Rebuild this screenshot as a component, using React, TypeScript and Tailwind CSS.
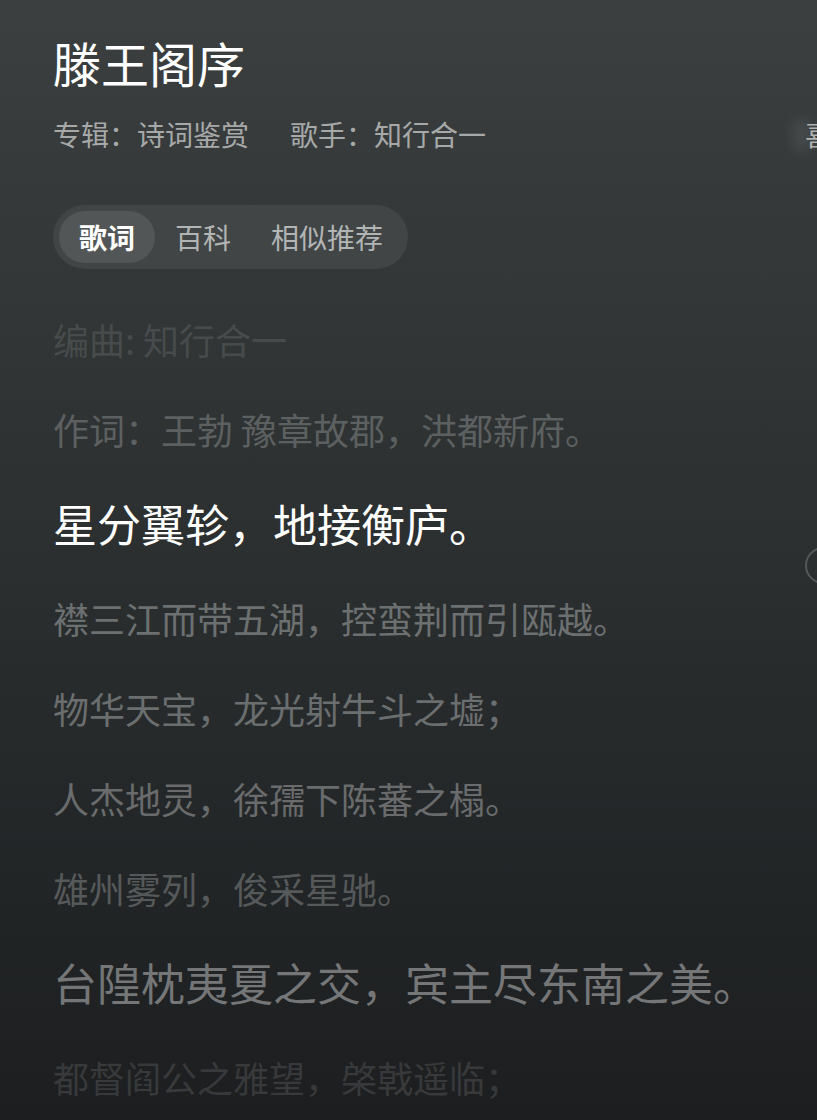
import React from 'react';

const FONT = '"Noto Sans CJK SC", "Noto Sans", sans-serif';

type Line = { text: string; tone: string; big?: boolean };

const lines: Line[] = [
  { text: '编曲: 知行合一', tone: 'text-[#474b4c]' },
  { text: '作词：王勃 豫章故郡，洪都新府。', tone: 'text-[#5d6061]' },
  { text: '星分翼轸，地接衡庐。', tone: 'text-white', big: true },
  { text: '襟三江而带五湖，控蛮荆而引瓯越。', tone: 'text-[#6d7071]' },
  { text: '物华天宝，龙光射牛斗之墟；', tone: 'text-[#6b6e6f]' },
  { text: '人杰地灵，徐孺下陈蕃之榻。', tone: 'text-[#696b6c]' },
  { text: '雄州雾列，俊采星驰。', tone: 'text-[#56595a]' },
  { text: '台隍枕夷夏之交，宾主尽东南之美。', tone: 'text-[#747677]', big: true },
  { text: '都督阎公之雅望，棨戟遥临；', tone: 'text-[#37393b]' },
];

function Tabs() {
  const tabs = ['歌词', '百科', '相似推荐'];
  return (
    <div className="mt-[57px] inline-flex items-center rounded-full bg-[#414546] p-[6px] pr-[5px]">
      {tabs.map((tab, i) => (
        <div
          key={tab}
          className={
            i === 0
              ? 'rounded-full bg-[#535657] px-5 py-3 text-[28px] leading-[28px] font-bold text-white'
              : 'rounded-full px-5 py-3 text-[28px] leading-[28px] text-[#b3b5b5]'
          }
        >
          {tab}
        </div>
      ))}
    </div>
  );
}

export default function App() {
  return (
    <div
      className="relative h-[1120px] w-[817px] overflow-hidden bg-gradient-to-b from-[#3b3f40] via-[#2b2f30] to-[#1c1e20]"
      style={{ fontFamily: FONT }}
    >
      <div className="flex flex-col items-start pl-[53px] pt-[38px]">
        <h1 className="text-[48px] leading-[48px] font-normal text-white">滕王阁序</h1>

        <div className="mt-[34px] flex gap-[41px] text-[28px] leading-[28px] text-[#a7a9a9]">
          <span>专辑：诗词鉴赏</span>
          <span>歌手：知行合一</span>
        </div>

        <Tabs />

        <div className="mt-[25px] flex flex-col">
          {lines.map((line) => (
            <p
              key={line.text}
              className={
                line.big
                  ? `h-[99px] whitespace-nowrap text-[44px] leading-[99px] ${line.tone}`
                  : `h-[90px] whitespace-nowrap text-[36px] leading-[90px] ${line.tone}`
              }
            >
              {line.text}
            </p>
          ))}
        </div>
      </div>

      {/* clipped neighbour text at right edge of the meta row */}
      <div className="absolute left-[792px] top-[118px] h-[34px] w-[20px] rounded-full bg-[#5a5e5f] opacity-40 blur-[6px]" />
      <span className="absolute left-[805px] top-[120px] whitespace-nowrap text-[28px] leading-[28px] text-[#b0b2b2]">
        喜欢
      </span>

      {/* scroll-to-current button, half off screen */}
      <div className="absolute left-[805px] top-[547px] h-[37px] w-[37px] rounded-full border-2 border-[#54585a]" />
    </div>
  );
}
